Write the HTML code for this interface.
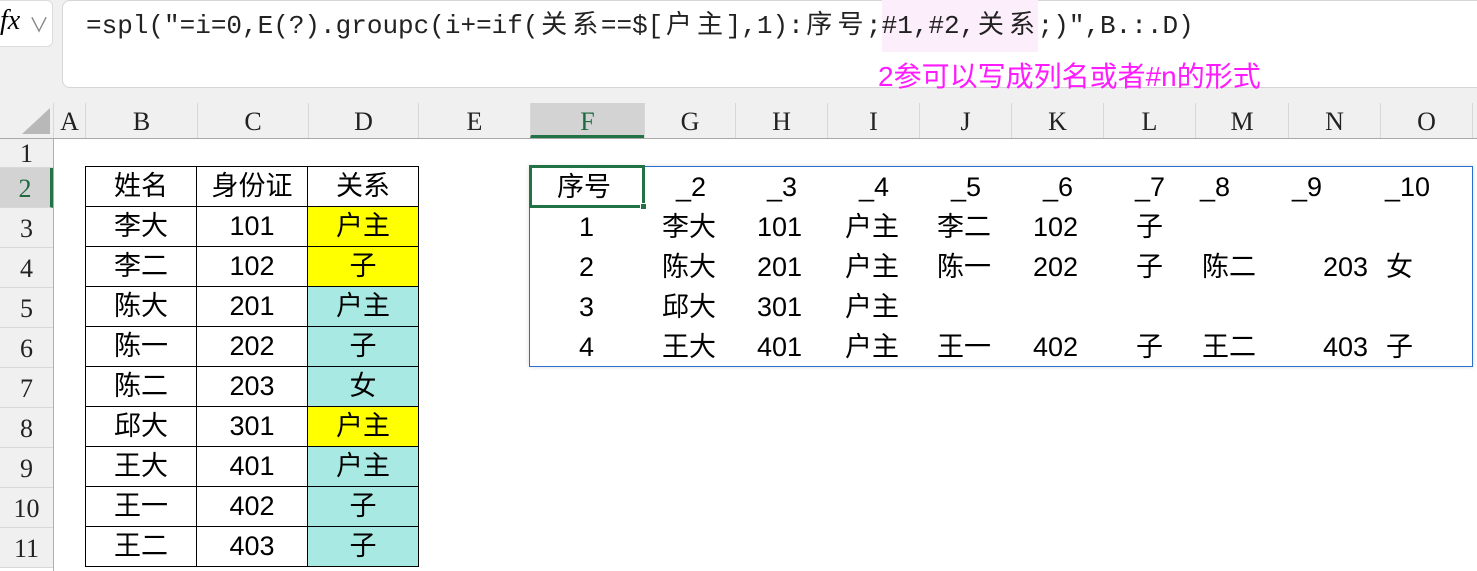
<!DOCTYPE html>
<html><head><meta charset="utf-8"><style>
*{margin:0;padding:0;box-sizing:border-box}
body{width:1477px;height:571px;overflow:hidden;background:#fff;position:relative;font-family:"Liberation Sans","Noto Sans CJK SC",sans-serif}
.a{position:absolute}
.top{left:0;top:0;width:1477px;height:138px;background:#f0f0f0}
.fx{left:-10px;top:0;width:63px;height:47px;background:#fff;border:1px solid #dcdcdc;border-radius:6px}
.fb{left:62px;top:0;width:1430px;height:88px;background:#fff;border:1px solid #d6d6d6;border-radius:8px}
.ftxt{left:86px;top:10px;font-family:"Liberation Mono","Noto Sans CJK SC",monospace;font-size:26px;line-height:32px;color:#222;white-space:pre}
.ftxt b{font-weight:normal;display:inline-block;width:31.2px;text-align:center}
.hl{left:882px;top:0;width:156px;height:52px;background:#fdeefb}
.note{left:878px;top:59px;font-size:28px;color:#ff1aff;line-height:36px;white-space:nowrap}
.ch{top:103px;height:35px;border-left:1px solid #d8d8d8;font-family:"Liberation Serif",serif;font-size:26px;text-align:center;line-height:38px;color:#222}
.rh{left:0;width:53px;height:40px;border-bottom:1px solid #d8d8d8;font-family:"Liberation Serif",serif;font-size:26px;text-align:center;line-height:42px;color:#222;background:#f0f0f0}
.lt{position:absolute;border:1px solid #000;font-size:27px;line-height:38px;text-align:center}
.t{position:absolute;font-size:27px;line-height:40px;color:#000;white-space:pre;font-family:"Liberation Sans Narrow","Liberation Sans","Noto Sans CJK SC",sans-serif}
</style></head><body>
<div class="a top"></div>
<div class="a fx"><span class="a" style="left:9px;top:4px;font-family:'Liberation Serif',serif;font-style:italic;font-size:28px">fx</span><span class="a" style="left:38px;top:8px;font-size:20px;color:#888">∨</span></div>
<div class="a fb"></div>
<div class="a hl"></div>
<div class="a ftxt">=spl("=i=0,E(?).groupc(i+=if(<b>关</b><b>系</b>==$[<b>户</b><b>主</b>],1):<b>序</b><b>号</b>;#1,#2,<b>关</b><b>系</b>;)",B.:.D)</div>
<div class="a note">2参可以写成列名或者#n的形式</div>
<svg class="a" style="left:20px;top:106px" width="32" height="30"><polygon points="30,2 30,28 2,28" fill="#b8b8b8"/></svg>
<div class="a" style="left:53px;top:103px;width:1px;height:468px;background:#b0b0b0"></div>
<div class="a" style="left:0;top:138px;width:1477px;height:1px;background:#a8a8a8"></div>
<div class="a ch" style="left:53px;width:32px">A</div>
<div class="a ch" style="left:85px;width:112px">B</div>
<div class="a ch" style="left:197px;width:111px">C</div>
<div class="a ch" style="left:308px;width:110px">D</div>
<div class="a ch" style="left:418px;width:112px">E</div>
<div class="a ch" style="left:530px;width:114px;background:#d3d3d3;color:#1e6b3f;border-bottom:3px solid #217346">F</div>
<div class="a ch" style="left:644px;width:91px">G</div>
<div class="a ch" style="left:735px;width:92px">H</div>
<div class="a ch" style="left:827px;width:92px">I</div>
<div class="a ch" style="left:919px;width:92px">J</div>
<div class="a ch" style="left:1011px;width:92px">K</div>
<div class="a ch" style="left:1103px;width:92px">L</div>
<div class="a ch" style="left:1195px;width:93px">M</div>
<div class="a ch" style="left:1288px;width:92px">N</div>
<div class="a ch" style="left:1380px;width:92px">O</div>
<div class="a ch" style="left:1472px;width:5px"></div>
<div class="a rh" style="top:139px;height:29px;line-height:30px">1</div>
<div class="a rh" style="top:168px;background:#d3d3d3;color:#1e6b3f;border-right:3px solid #217346">2</div>
<div class="a rh" style="top:208px">3</div>
<div class="a rh" style="top:248px">4</div>
<div class="a rh" style="top:288px">5</div>
<div class="a rh" style="top:328px">6</div>
<div class="a rh" style="top:368px">7</div>
<div class="a rh" style="top:408px">8</div>
<div class="a rh" style="top:448px">9</div>
<div class="a rh" style="top:488px">10</div>
<div class="a rh" style="top:528px">11</div>
<div class="a" style="left:85px;top:166px">
<div class="lt" style="left:0;top:0;width:112px;height:41px">姓名</div><div class="lt" style="left:111px;top:0;width:112px;height:41px">身份证</div><div class="lt" style="left:222px;top:0;width:112px;height:41px">关系</div>
<div class="lt" style="left:0;top:40px;width:112px;height:41px">李大</div><div class="lt" style="left:111px;top:40px;width:112px;height:41px">101</div><div class="lt" style="left:222px;top:40px;width:112px;height:41px;background:#ffff00">户主</div>
<div class="lt" style="left:0;top:80px;width:112px;height:41px">李二</div><div class="lt" style="left:111px;top:80px;width:112px;height:41px">102</div><div class="lt" style="left:222px;top:80px;width:112px;height:41px;background:#ffff00">子</div>
<div class="lt" style="left:0;top:120px;width:112px;height:41px">陈大</div><div class="lt" style="left:111px;top:120px;width:112px;height:41px">201</div><div class="lt" style="left:222px;top:120px;width:112px;height:41px;background:#a9e9e3">户主</div>
<div class="lt" style="left:0;top:160px;width:112px;height:41px">陈一</div><div class="lt" style="left:111px;top:160px;width:112px;height:41px">202</div><div class="lt" style="left:222px;top:160px;width:112px;height:41px;background:#a9e9e3">子</div>
<div class="lt" style="left:0;top:200px;width:112px;height:41px">陈二</div><div class="lt" style="left:111px;top:200px;width:112px;height:41px">203</div><div class="lt" style="left:222px;top:200px;width:112px;height:41px;background:#a9e9e3">女</div>
<div class="lt" style="left:0;top:240px;width:112px;height:41px">邱大</div><div class="lt" style="left:111px;top:240px;width:112px;height:41px">301</div><div class="lt" style="left:222px;top:240px;width:112px;height:41px;background:#ffff00">户主</div>
<div class="lt" style="left:0;top:280px;width:112px;height:41px">王大</div><div class="lt" style="left:111px;top:280px;width:112px;height:41px">401</div><div class="lt" style="left:222px;top:280px;width:112px;height:41px;background:#a9e9e3">户主</div>
<div class="lt" style="left:0;top:320px;width:112px;height:41px">王一</div><div class="lt" style="left:111px;top:320px;width:112px;height:41px">402</div><div class="lt" style="left:222px;top:320px;width:112px;height:41px;background:#a9e9e3">子</div>
<div class="lt" style="left:0;top:360px;width:112px;height:41px">王二</div><div class="lt" style="left:111px;top:360px;width:112px;height:41px">403</div><div class="lt" style="left:222px;top:360px;width:112px;height:41px;background:#a9e9e3">子</div>
</div>
<div class="a" style="left:529px;top:166px;width:944px;height:201px;border:1px solid #2a6fd0;box-shadow:0 0 4px rgba(0,0,0,.15)"></div>
<div class="a" style="left:529px;top:165px;width:116px;height:43px;border:3px solid #217346"></div>
<div class="a" style="left:640px;top:203px;width:7px;height:7px;background:#217346;border:1px solid #fff"></div>
<div class="t" style="left:557px;top:167px">序号</div>
<div class="t" style="left:676px;top:167px">_2</div><div class="t" style="left:767px;top:167px">_3</div><div class="t" style="left:859px;top:167px">_4</div><div class="t" style="left:951px;top:167px">_5</div><div class="t" style="left:1043px;top:167px">_6</div><div class="t" style="left:1135px;top:167px">_7</div><div class="t" style="left:1200px;top:167px">_8</div><div class="t" style="left:1292px;top:167px">_9</div><div class="t" style="left:1385px;top:167px">_10</div>
<div class="t" style="left:579px;top:207px">1</div><div class="t" style="left:662px;top:207px">李大</div><div class="t" style="left:757px;top:207px">101</div><div class="t" style="left:845px;top:207px">户主</div><div class="t" style="left:937px;top:207px">李二</div><div class="t" style="left:1033px;top:207px">102</div><div class="t" style="left:1136px;top:207px">子</div>
<div class="t" style="left:579px;top:247px">2</div><div class="t" style="left:662px;top:247px">陈大</div><div class="t" style="left:757px;top:247px">201</div><div class="t" style="left:845px;top:247px">户主</div><div class="t" style="left:937px;top:247px">陈一</div><div class="t" style="left:1033px;top:247px">202</div><div class="t" style="left:1136px;top:247px">子</div><div class="t" style="left:1202px;top:247px">陈二</div><div class="t" style="left:1323px;top:247px">203</div><div class="t" style="left:1386px;top:247px">女</div>
<div class="t" style="left:579px;top:287px">3</div><div class="t" style="left:662px;top:287px">邱大</div><div class="t" style="left:757px;top:287px">301</div><div class="t" style="left:845px;top:287px">户主</div>
<div class="t" style="left:579px;top:327px">4</div><div class="t" style="left:662px;top:327px">王大</div><div class="t" style="left:757px;top:327px">401</div><div class="t" style="left:845px;top:327px">户主</div><div class="t" style="left:937px;top:327px">王一</div><div class="t" style="left:1033px;top:327px">402</div><div class="t" style="left:1136px;top:327px">子</div><div class="t" style="left:1202px;top:327px">王二</div><div class="t" style="left:1323px;top:327px">403</div><div class="t" style="left:1386px;top:327px">子</div>
</body></html>
